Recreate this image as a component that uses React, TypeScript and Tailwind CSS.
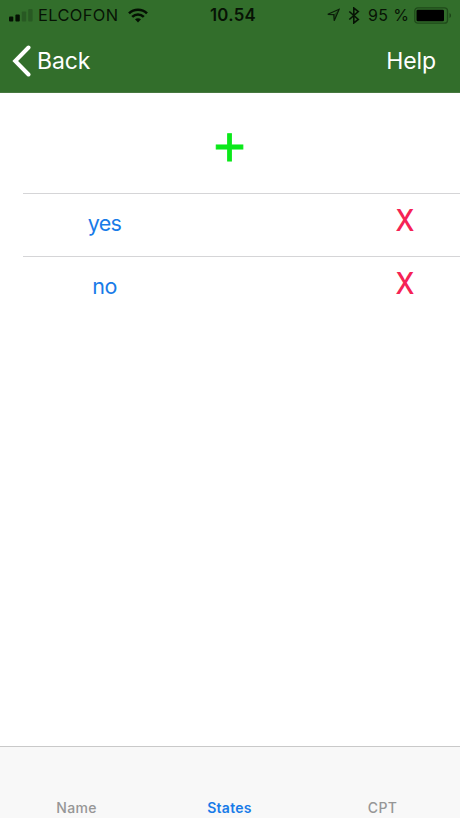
import React from "react";

interface StateRowProps {
  name: string;
}

interface TabProps {
  name: string;
  active?: boolean;
}

function StatusBar() {
  return (
    <div className="flex h-[30px] items-center pl-[9px] pr-[8px] text-[17px] leading-[30px] text-[#071305]">
      <div className="flex flex-1 items-center">
        <svg width="24" height="14" viewBox="0 0 24 14">
          <rect x="0" y="8.4" width="4.3" height="5" rx="1" fill="#041003" />
          <rect x="6.4" y="6.4" width="4.4" height="7" rx="1" fill="#041003" />
          <rect x="12.8" y="3.6" width="4.4" height="9.8" rx="1" fill="#285923" />
          <rect x="19.2" y="1" width="4.4" height="12.4" rx="1" fill="#285923" />
        </svg>
        <span className="ml-[5px] w-[82px] whitespace-nowrap text-[16.4px] tracking-[0.4px]">ELCOFON</span>
        <svg className="ml-[8px]" width="20" height="15" viewBox="0 0 20 15">
          <g fill="none" stroke="#041003" strokeWidth="2.6">
            <path d="M1 5.4C6 .6 14 .6 19 5.4" />
            <path d="M4.2 8.9c3.4-3.2 8.2-3.2 11.6 0" />
          </g>
          <path d="M7 11.3c1.8-1.5 4.2-1.5 6 0L10 14.5z" fill="#041003" />
        </svg>
      </div>
      <span className="ml-[5px] text-[16.8px] font-semibold tracking-[0.3px]">10.54</span>
      <div className="flex flex-1 items-center justify-end">
        <svg width="14" height="14" viewBox="0 0 14 14">
          <path d="M13.2 1.2 1.8 6.3l6 .3.4 6.2z" fill="none" stroke="#0b1d09" strokeWidth="1.2" />
          <path d="M13.2 1.2 7.8 6.6l.4 6.2z" fill="#0b1d09" fillOpacity="0.4" />
        </svg>
        <svg className="ml-[8px]" width="12" height="17" viewBox="0 0 12 17">
          <path d="M1.3 4.5l9 8-4.5 3.5V1l4.5 3.5-9 8" fill="none" stroke="#071305" strokeWidth="1.6" />
        </svg>
        <span className="ml-[8px] w-[41px] whitespace-nowrap text-[16px] tracking-[0.4px]">95 %</span>
        <svg className="ml-[5px]" width="38" height="17" viewBox="0 0 38 17">
          <rect x="0.8" y="0.8" width="32.7" height="15.4" rx="3" fill="none" stroke="#1f4a1a" strokeWidth="1.3" />
          <rect x="2.5" y="2.8" width="27.5" height="11.4" rx="1.3" fill="#000" />
          <path d="M35.5 6c2 .7 2 4.3 0 5z" fill="#1b4217" />
        </svg>
      </div>
    </div>
  );
}

function NavBar() {
  return (
    <div className="flex h-[62px] items-center justify-between pl-[12px] pr-[24px] text-white">
      <button className="flex items-center">
        <svg width="20" height="32" viewBox="0 0 20 32">
          <path d="M16.5 2.5 3.2 16l13.3 13.5" fill="none" stroke="#fff" strokeWidth="4" strokeLinecap="round" />
        </svg>
        <span className="ml-[5px] text-[23px] tracking-[-0.1px]">Back</span>
      </button>
      <button className="text-[23px] tracking-[-0.1px]">Help</button>
    </div>
  );
}

function StateRow({ name }: StateRowProps) {
  return (
    <div className="ml-[23px] flex h-[63px] border-t border-[#d5d5d7]">
      <button className="h-[58px] w-[163px] text-[21.5px] leading-[58px] tracking-[-0.6px] text-[#187be8]">
        {name}
      </button>
      <button className="ml-auto mr-[35px] h-[52px] w-[40px] scale-x-90 text-[30px] leading-[52px] font-medium text-[#f52355]">
        X
      </button>
    </div>
  );
}

function Tab({ name, active }: TabProps) {
  return (
    <button
      className={
        active
          ? "flex-1 pt-[51px] text-[14px] leading-[20px] font-semibold tracking-[0.3px] text-[#187be8]"
          : "flex-1 pt-[51px] text-[14px] leading-[20px] font-medium tracking-[0.3px] text-[#969696]"
      }
    >
      {name}
    </button>
  );
}

export default function App() {
  return (
    <div className="flex h-[818px] w-[460px] flex-col overflow-hidden bg-white font-['Inter',sans-serif]">
      <header className="h-[93px] shrink-0 border-b border-[#46783f] bg-[#326e2b]">
        <StatusBar />
        <NavBar />
      </header>
      <main className="flex-1">
        <div className="flex h-[100px] justify-center pr-[1px]">
          <button className="h-[100px] font-['Liberation_Sans',sans-serif] text-[55px] leading-[108px] text-[#0be81a] [-webkit-text-stroke:0.8px_#0be81a]">
            +
          </button>
        </div>
        <StateRow name="yes" />
        <StateRow name="no" />
      </main>
      <footer className="flex h-[72px] shrink-0 border-t border-[#c9c9c9] bg-[#f8f8f8] pr-[1px]">
        <Tab name="Name" />
        <Tab name="States" active />
        <Tab name="CPT" />
      </footer>
    </div>
  );
}
